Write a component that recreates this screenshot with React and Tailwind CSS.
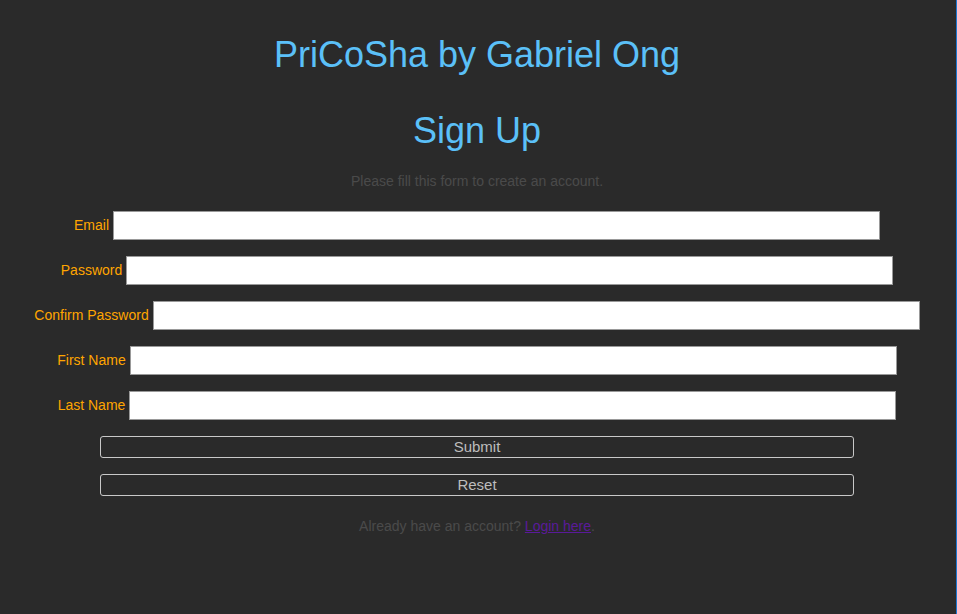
const fields = [
  { label: 'Email', type: 'text' },
  { label: 'Password', type: 'password' },
  { label: 'Confirm Password', type: 'password' },
  { label: 'First Name', type: 'text' },
  { label: 'Last Name', type: 'text' },
];

function Field({ label, type }) {
  return (
    <div className="flex items-center justify-center gap-1">
      <label className="text-[14px] text-[#ffa500]">{label}</label>
      <input
        type={type}
        className="w-[767px] h-[29px] bg-white border border-[#999] outline-none px-1 text-black text-[14px]"
      />
    </div>
  );
}

export default function App() {
  return (
    <div className="flex w-[957px] h-[614px] bg-[#2a2a2a] font-['Liberation_Sans',Arial,sans-serif]">
      <div className="w-[956px] flex flex-col items-center pt-[34px] pr-[2px]">
        <h1 className="text-[36px] leading-[41px] text-[#5bc0f8]">PriCoSha by Gabriel Ong</h1>
        <h2 className="mt-[35px] text-[36px] leading-[41px] text-[#5bc0f8]">Sign Up</h2>
        <p className="mt-[22px] text-[14px] leading-[16px] text-[#4a4a4a]">
          Please fill this form to create an account.
        </p>

        <form className="mt-[22px] flex flex-col gap-4 w-full" onSubmit={e => e.preventDefault()}>
          {fields.map(f => (
            <Field key={f.label} {...f} />
          ))}
          <div className="flex flex-col items-center gap-4">
            <button className="w-[754px] h-[22px] border border-[#c8c8c8] rounded-[3px] text-[15px] leading-[20px] text-[#bdbdbd]">
              Submit
            </button>
            <button type="reset" className="w-[754px] h-[22px] border border-[#c8c8c8] rounded-[3px] text-[15px] leading-[20px] text-[#bdbdbd]">
              Reset
            </button>
          </div>
        </form>

        <p className="mt-[22px] text-[14px] leading-[16px] text-[#4a4a4a]">
          Already have an account?{' '}
          <a href="#" className="text-[#5a1a9a] underline">Login here</a>.
        </p>
      </div>
      <div className="w-px h-full bg-[#1a78d2]" />
    </div>
  );
}
